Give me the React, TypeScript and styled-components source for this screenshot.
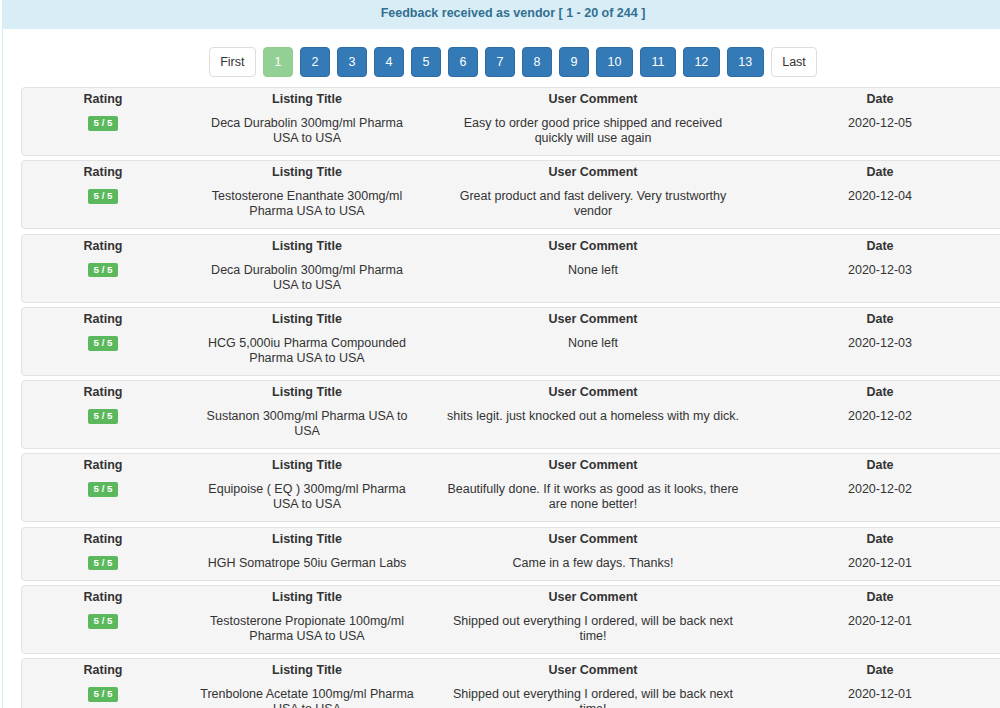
import styled, { createGlobalStyle } from 'styled-components'

interface Feedback {
  rating: string
  title: string
  comment: string
  date: string
}

const feedback: Feedback[] = [
  {
    rating: '5 / 5',
    title: 'Deca Durabolin 300mg/ml Pharma USA to USA',
    comment: 'Easy to order good price shipped and received quickly will use again',
    date: '2020-12-05',
  },
  {
    rating: '5 / 5',
    title: 'Testosterone Enanthate 300mg/ml Pharma USA to USA',
    comment: 'Great product and fast delivery. Very trustworthy vendor',
    date: '2020-12-04',
  },
  {
    rating: '5 / 5',
    title: 'Deca Durabolin 300mg/ml Pharma USA to USA',
    comment: 'None left',
    date: '2020-12-03',
  },
  {
    rating: '5 / 5',
    title: 'HCG 5,000iu Pharma Compounded Pharma USA to USA',
    comment: 'None left',
    date: '2020-12-03',
  },
  {
    rating: '5 / 5',
    title: 'Sustanon 300mg/ml Pharma USA to USA',
    comment: 'shits legit. just knocked out a homeless with my dick.',
    date: '2020-12-02',
  },
  {
    rating: '5 / 5',
    title: 'Equipoise ( EQ ) 300mg/ml Pharma USA to USA',
    comment: 'Beautifully done. If it works as good as it looks, there are none better!',
    date: '2020-12-02',
  },
  {
    rating: '5 / 5',
    title: 'HGH Somatrope 50iu German Labs',
    comment: 'Came in a few days. Thanks!',
    date: '2020-12-01',
  },
  {
    rating: '5 / 5',
    title: 'Testosterone Propionate 100mg/ml Pharma USA to USA',
    comment: 'Shipped out everything I ordered, will be back next time!',
    date: '2020-12-01',
  },
  {
    rating: '5 / 5',
    title: 'Trenbolone Acetate 100mg/ml Pharma USA to USA',
    comment: 'Shipped out everything I ordered, will be back next time!',
    date: '2020-12-01',
  },
]

const pages = ['1', '2', '3', '4', '5', '6', '7', '8', '9', '10', '11', '12', '13']

export default function App() {
  return (
    <>
      <GlobalStyle />
      <Panel>
        {/* Heading */}
        <PanelHeading>Feedback received as vendor [ 1 - 20 of 244 ]</PanelHeading>

        <PanelBody>
          {/* Pagination */}
          <Pager>
            <PageButton>First</PageButton>
            {pages.map((p) => (
              <PageButton key={p} variant={p === '1' ? 'active' : 'primary'}>
                {p}
              </PageButton>
            ))}
            <PageButton>Last</PageButton>
          </Pager>

          {/* Feedback list */}
          {feedback.map((item, i) => (
            <Well key={i}>
              <Cell>
                <Head>Rating</Head>
                <Badge>{item.rating}</Badge>
              </Cell>
              <Cell>
                <Head>Listing Title</Head>
                {item.title}
              </Cell>
              <Cell>
                <Head>User Comment</Head>
                {item.comment}
              </Cell>
              <Cell>
                <Head>Date</Head>
                {item.date}
              </Cell>
            </Well>
          ))}
        </PanelBody>
      </Panel>
    </>
  )
}

const GlobalStyle = createGlobalStyle`
  html, body {
    margin: 0;
    padding: 0;
    background: #fff;
    overflow: hidden;
  }
  body {
    font-family: "Liberation Sans", Arial, sans-serif;
    font-size: 12.5px;
    line-height: 15px;
    color: #333;
  }
`

const Panel = styled.div`
  margin-left: 2px;
  width: 1020px;
  border-left: 1px solid #d6eef5;
  height: 708px;
  overflow: hidden;
`

const PanelHeading = styled.div`
  background: #d9edf7;
  color: #31708f;
  font-weight: 700;
  text-align: center;
  padding: 6px 0 8px;
  line-height: 15px;
`

const PanelBody = styled.div`
  padding: 18px 0 0 18px;
`

const Pager = styled.div`
  display: flex;
  justify-content: center;
  gap: 7px;
  width: 984px;
  margin-bottom: 10px;
`

const PageButton = styled.span<{ variant?: 'primary' | 'active' }>`
  display: inline-flex;
  align-items: center;
  justify-content: center;
  height: 30px;
  box-sizing: border-box;
  padding: 0 10.5px;
  border-radius: 4px;
  border: 1px solid
    ${({ variant }) =>
      variant === 'primary' ? '#2e6da4' : variant === 'active' ? '#8fce91' : '#ddd'};
  background: ${({ variant }) =>
    variant === 'primary' ? '#337ab7' : variant === 'active' ? '#93d095' : '#fff'};
  color: ${({ variant }) => (variant ? '#fff' : '#333')};
  min-width: 30px;
`

const Well = styled.div`
  display: grid;
  grid-template-columns: 162px 246px 326px 248px;
  width: 984px;
  box-sizing: border-box;
  background: #f5f5f5;
  border: 1px solid #e3e3e3;
  border-radius: 4px;
  padding: 4px 0 9px;
  margin-bottom: 4.25px;
`

const Cell = styled.div`
  text-align: center;
  padding: 0 14px;
`

const Head = styled.div`
  font-weight: 700;
  margin-bottom: 9px;
`

const Badge = styled.span`
  display: inline-block;
  background: #5cb85c;
  color: #fff;
  font-weight: 700;
  font-size: 9.75px;
  line-height: 1;
  padding: 2px 6px 3px;
  border-radius: 2px;
  vertical-align: 1px;
`
